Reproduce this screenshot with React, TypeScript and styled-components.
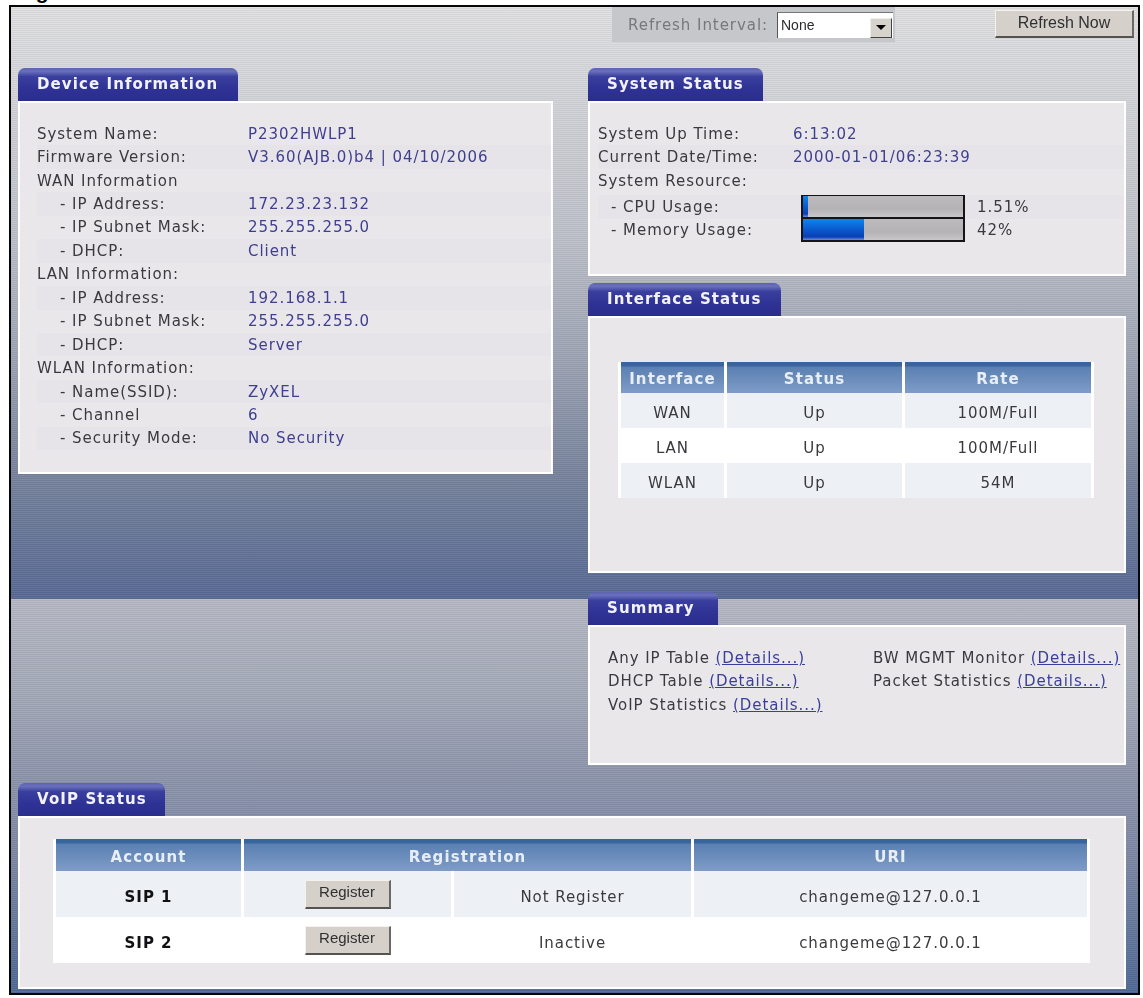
import styled, { createGlobalStyle } from 'styled-components'

const GlobalStyle = createGlobalStyle`
  html, body {
    margin: 0;
    padding: 0;
    background: #ffffff;
  }
`

const Page = styled.div`
  width: 1143px;
  height: 998px;
  overflow: hidden;
  box-sizing: border-box;
  padding-left: 9px;
  font-family: "DejaVu Sans", Verdana, sans-serif;
  font-size: 15px;
  letter-spacing: 0.95px;
  color: #3a3a3e;
`

const Caption = styled.div`
  height: 5px;
  box-sizing: border-box;
  padding-bottom: 3px;
  overflow: hidden;
  display: flex;
  align-items: flex-end;
  font-family: "Liberation Sans", Arial, sans-serif;
  font-weight: 700;
  font-size: 21px;
  line-height: 21px;
  letter-spacing: 0;
  color: #000000;
  margin-left: 8px;
`

const Frame = styled.div`
  width: 1131px;
  height: 990px;
  box-sizing: border-box;
  border: 2px solid #060608;
  display: flex;
  flex-direction: column;
  filter: blur(0.35px);
`

const stripes = `repeating-linear-gradient(180deg, rgba(255,255,255,0.05) 0 1px, rgba(0,0,0,0.045) 1px 2px)`

const TopBand = styled.div`
  height: 592px;
  flex: none;
  box-sizing: border-box;
  padding: 0 12px 0 7px;
  display: flex;
  flex-direction: column;
  background: ${stripes}, linear-gradient(180deg, #e0e0e2 0%, #d4d5d9 14%, #bcbfc8 40%, #9ca3b3 60%, #76829c 80%, #586a94 100%);
`

const BottomBand = styled.div`
  flex: 1;
  box-sizing: border-box;
  padding: 0 12px 0 7px;
  display: flex;
  flex-direction: column;
  background: ${stripes}, linear-gradient(180deg, #b6b9c4 0%, #a4a9b8 24%, #8c94ab 46%, #7d88a4 65%, #4f6a94 100%);
`

const Toolbar = styled.div`
  height: 61px;
  flex: none;
  display: flex;
  align-items: flex-start;
  padding-left: 594px;
  margin-right: -10px;
`

const RefreshChip = styled.div`
  width: 283px;
  height: 35px;
  display: flex;
  align-items: center;
  box-sizing: border-box;
  padding: 0 2px 0 16px;
  background: #c6c7cb;
  color: #77787c;
  white-space: nowrap;
`

const SelectBox = styled.div`
  width: 116px;
  height: 26px;
  margin-left: auto;
  box-sizing: border-box;
  background: #ffffff;
  border-left: 1px solid #555;
  border-top: 1px solid #777;
  padding: 4px 1px 0 3px;
  display: flex;
  justify-content: space-between;
  font-family: "Liberation Sans", Arial, sans-serif;
  font-size: 14px;
  letter-spacing: 0;
  color: #2c2c30;
  flex: none;
`

const SelectArrow = styled.span`
  width: 22px;
  height: 20px;
  margin-top: 1px;
  background: #d6d3cd;
  border: 1px solid;
  border-color: #f0eeea #44423e #44423e #f0eeea;
  box-sizing: border-box;
  display: flex;
  align-items: center;
  justify-content: center;
  &::after {
    content: '';
    border: 5px solid transparent;
    border-top: 5px solid #000000;
    border-bottom: 0;
  }
`

const ActionButton = styled.button<{ $wide?: boolean }>`
  width: ${p => (p.$wide ? 139 : 86)}px;
  height: ${p => (p.$wide ? 28 : 29)}px;
  margin-left: ${p => (p.$wide ? 100 : 0)}px;
  margin-top: ${p => (p.$wide ? 3 : 0)}px;
  padding: 0 0 ${p => (p.$wide ? 2 : 4)}px;
  background: #d5d1ca;
  border: 1px solid;
  border-color: #f4f2ee #6b6964 #55534f #f4f2ee;
  border-width: 1px 2px 2px 1px;
  font-family: "Liberation Sans", Arial, sans-serif;
  font-size: ${p => (p.$wide ? 16 : 15)}px;
  letter-spacing: 0;
  color: #303034;
`

const Columns = styled.div`
  display: grid;
  grid-template-columns: 535px 538px;
  column-gap: 35px;
  align-items: start;
`

const Stack = styled.div`
  display: flex;
  flex-direction: column;
`

const Section = styled.section<{ $gap?: number }>`
  margin-top: ${p => p.$gap ?? 0}px;
`

const Tab = styled.div<{ $width: number }>`
  width: ${p => p.$width}px;
  height: 33px;
  box-sizing: border-box;
  padding: 0 0 2px 19px;
  display: flex;
  align-items: center;
  border-radius: 7px 7px 0 0;
  background: linear-gradient(180deg, #5c62b0 0%, #6a70bc 10%, #3a3f9e 26%, #2f3396 60%, #2a2d8c 100%);
  font-weight: 700;
  letter-spacing: 1.1px;
  color: #f2f2f8;
  white-space: nowrap;
`

const Panel = styled.div<{ $height: number; $padding?: string }>`
  height: ${p => p.$height}px;
  box-sizing: border-box;
  border: 2px solid #ffffff;
  background: #e9e7ea;
  padding: ${p => p.$padding ?? '0'};
`

const InfoRow = styled.div<{ $striped?: boolean; $gap?: number }>`
  display: flex;
  align-items: center;
  height: 23.45px;
  margin-top: ${p => p.$gap ?? 0}px;
  white-space: nowrap;
  background: ${p => (p.$striped ? '#e6e4e8' : 'transparent')};
`

const InfoLabel = styled.div<{ $width: number; $indent?: number }>`
  width: ${p => p.$width}px;
  flex: none;
  box-sizing: border-box;
  padding-left: ${p => p.$indent ?? 0}px;
`

const InfoValue = styled.div`
  color: #3f3f90;
`

const UsageBar = styled.div`
  width: 164px;
  height: 24px;
  flex: none;
  box-sizing: border-box;
  border: 2px solid #151518;
  border-top-width: 1px;
  background: linear-gradient(180deg, #bdbbbd 0%, #b4b2b5 60%, #c8c6c9 100%);
`

const UsageFill = styled.div`
  height: 100%;
  background: linear-gradient(180deg, #0f86ea 0%, #0a5ed2 45%, #0a3fb4 85%, #6c8ee0 100%);
`

const UsageText = styled.div`
  margin-left: 12px;
`

const GridTable = styled.table<{ $width: number }>`
  width: ${p => p.$width}px;
  border-collapse: separate;
  border-spacing: 3px 0;
  background: #ffffff;
  table-layout: fixed;
  text-align: center;
`

const HeadCell = styled.th<{ $height: number }>`
  height: ${p => p.$height}px;
  padding: 3px 0 0;
  background: linear-gradient(180deg, #37669f 0, #37669f 4px, #5a80b2 5px, #7f9cc7 100%);
  color: #e8eef6;
  font-weight: 700;
  letter-spacing: 1.1px;
`

const BodyCell = styled.td<{ $height: number; $tinted?: boolean; $bold?: boolean; $flush?: boolean }>`
  height: ${p => p.$height}px;
  box-sizing: border-box;
  padding: ${p => (p.$flush ? 0 : 5)}px 0 0;
  background: ${p => (p.$tinted ? '#edf1f5' : '#ffffff')};
  font-weight: ${p => (p.$bold ? 700 : 400)};
  color: ${p => (p.$bold ? '#111114' : '#3a3a3e')};
`

const SummaryGrid = styled.div`
  display: grid;
  grid-template-columns: 265px auto;
  grid-auto-rows: 23.5px;
  align-items: center;
  white-space: nowrap;
`

const DetailsLink = styled.a`
  color: #3a3f9c;
  text-decoration: underline;
  cursor: pointer;
`

const deviceRows = [
  { label: 'System Name:', value: 'P2302HWLP1' },
  { label: 'Firmware Version:', value: 'V3.60(AJB.0)b4 | 04/10/2006' },
  { label: 'WAN Information' },
  { label: '- IP Address:', value: '172.23.23.132', indent: 23 },
  { label: '- IP Subnet Mask:', value: '255.255.255.0', indent: 23 },
  { label: '- DHCP:', value: 'Client', indent: 23 },
  { label: 'LAN Information:' },
  { label: '- IP Address:', value: '192.168.1.1', indent: 23 },
  { label: '- IP Subnet Mask:', value: '255.255.255.0', indent: 23 },
  { label: '- DHCP:', value: 'Server', indent: 23 },
  { label: 'WLAN Information:' },
  { label: '- Name(SSID):', value: 'ZyXEL', indent: 23 },
  { label: '- Channel', value: '6', indent: 23 },
  { label: '- Security Mode:', value: 'No Security', indent: 23 },
]

const interfaceRows = [
  ['WAN', 'Up', '100M/Full'],
  ['LAN', 'Up', '100M/Full'],
  ['WLAN', 'Up', '54M'],
]

const summaryItems = [
  'Any IP Table',
  'BW MGMT Monitor',
  'DHCP Table',
  'Packet Statistics',
  'VoIP Statistics',
]

const voipRows = [
  { account: 'SIP 1', status: 'Not Register' },
  { account: 'SIP 2', status: 'Inactive' },
]

const App = () => {
  return (
    <Page>
      <GlobalStyle />
      <Caption>Figure</Caption>
      <Frame>
        <TopBand>
          <Toolbar>
            <RefreshChip>
              Refresh Interval:
              <SelectBox>
                None
                <SelectArrow />
              </SelectBox>
            </RefreshChip>
            <ActionButton $wide>Refresh Now</ActionButton>
          </Toolbar>
          <Columns>
            <Section>
              <Tab $width={220}>Device Information</Tab>
              <Panel $height={373} $padding="19px 0 0 17px">
                {deviceRows.map((row, i) => (
                  <InfoRow key={i} $striped={i % 2 === 1}>
                    <InfoLabel $width={211} $indent={row.indent}>{row.label}</InfoLabel>
                    <InfoValue>{row.value}</InfoValue>
                  </InfoRow>
                ))}
              </Panel>
            </Section>
            <Stack>
              <Section>
                <Tab $width={175}>System Status</Tab>
                <Panel $height={175} $padding="19px 0 0 8px">
                  <InfoRow>
                    <InfoLabel $width={195}>System Up Time:</InfoLabel>
                    <InfoValue>6:13:02</InfoValue>
                  </InfoRow>
                  <InfoRow $striped>
                    <InfoLabel $width={195}>Current Date/Time:</InfoLabel>
                    <InfoValue>2000-01-01/06:23:39</InfoValue>
                  </InfoRow>
                  <InfoRow>
                    <InfoLabel $width={195}>System Resource:</InfoLabel>
                  </InfoRow>
                  <InfoRow $striped $gap={3}>
                    <InfoLabel $width={203} $indent={13}>- CPU Usage:</InfoLabel>
                    <UsageBar><UsageFill style={{ width: '3%' }} /></UsageBar>
                    <UsageText>1.51%</UsageText>
                  </InfoRow>
                  <InfoRow>
                    <InfoLabel $width={203} $indent={13}>- Memory Usage:</InfoLabel>
                    <UsageBar><UsageFill style={{ width: '38%' }} /></UsageBar>
                    <UsageText>42%</UsageText>
                  </InfoRow>
                </Panel>
              </Section>
              <Section $gap={7}>
                <Tab $width={193}>Interface Status</Tab>
                <Panel $height={257} $padding="44px 0 0 28px">
                  <GridTable $width={476}>
                    <colgroup>
                      <col style={{ width: 103 }} />
                      <col style={{ width: 175 }} />
                    </colgroup>
                    <thead>
                      <tr>
                        <HeadCell $height={28}>Interface</HeadCell>
                        <HeadCell $height={28}>Status</HeadCell>
                        <HeadCell $height={28}>Rate</HeadCell>
                      </tr>
                    </thead>
                    <tbody>
                      {interfaceRows.map((row, i) => (
                        <tr key={row[0]}>
                          {row.map((cell, j) => (
                            <BodyCell key={j} $height={35} $tinted={i % 2 === 0}>{cell}</BodyCell>
                          ))}
                        </tr>
                      ))}
                    </tbody>
                  </GridTable>
                </Panel>
              </Section>
            </Stack>
          </Columns>
        </TopBand>
        <BottomBand>
          <Columns>
            <div />
            <Section $gap={-7}>
              <Tab $width={130}>Summary</Tab>
              <Panel $height={140} $padding="19px 0 0 18px">
                <SummaryGrid>
                  {summaryItems.map(item => (
                    <div key={item}>
                      {item} <DetailsLink>(Details...)</DetailsLink>
                    </div>
                  ))}
                </SummaryGrid>
              </Panel>
            </Section>
          </Columns>
          <Section $gap={18}>
            <Tab $width={147}>VoIP Status</Tab>
            <Panel $height={173} $padding="21px 0 0 33px">
              <GridTable $width={1037}>
                <colgroup>
                  <col style={{ width: 185 }} />
                  <col style={{ width: 207 }} />
                  <col style={{ width: 237 }} />
                </colgroup>
                <thead>
                  <tr>
                    <HeadCell $height={29}>Account</HeadCell>
                    <HeadCell $height={29} colSpan={2}>Registration</HeadCell>
                    <HeadCell $height={29}>URI</HeadCell>
                  </tr>
                </thead>
                <tbody>
                  {voipRows.map((row, i) => (
                    <tr key={row.account}>
                      <BodyCell $height={46} $tinted={i === 0} $bold>{row.account}</BodyCell>
                      <BodyCell $height={46} $tinted={i === 0} $flush>
                        <ActionButton>Register</ActionButton>
                      </BodyCell>
                      <BodyCell $height={46} $tinted={i === 0}>{row.status}</BodyCell>
                      <BodyCell $height={46} $tinted={i === 0}>changeme@127.0.0.1</BodyCell>
                    </tr>
                  ))}
                </tbody>
              </GridTable>
            </Panel>
          </Section>
        </BottomBand>
      </Frame>
    </Page>
  )
}

export default App
